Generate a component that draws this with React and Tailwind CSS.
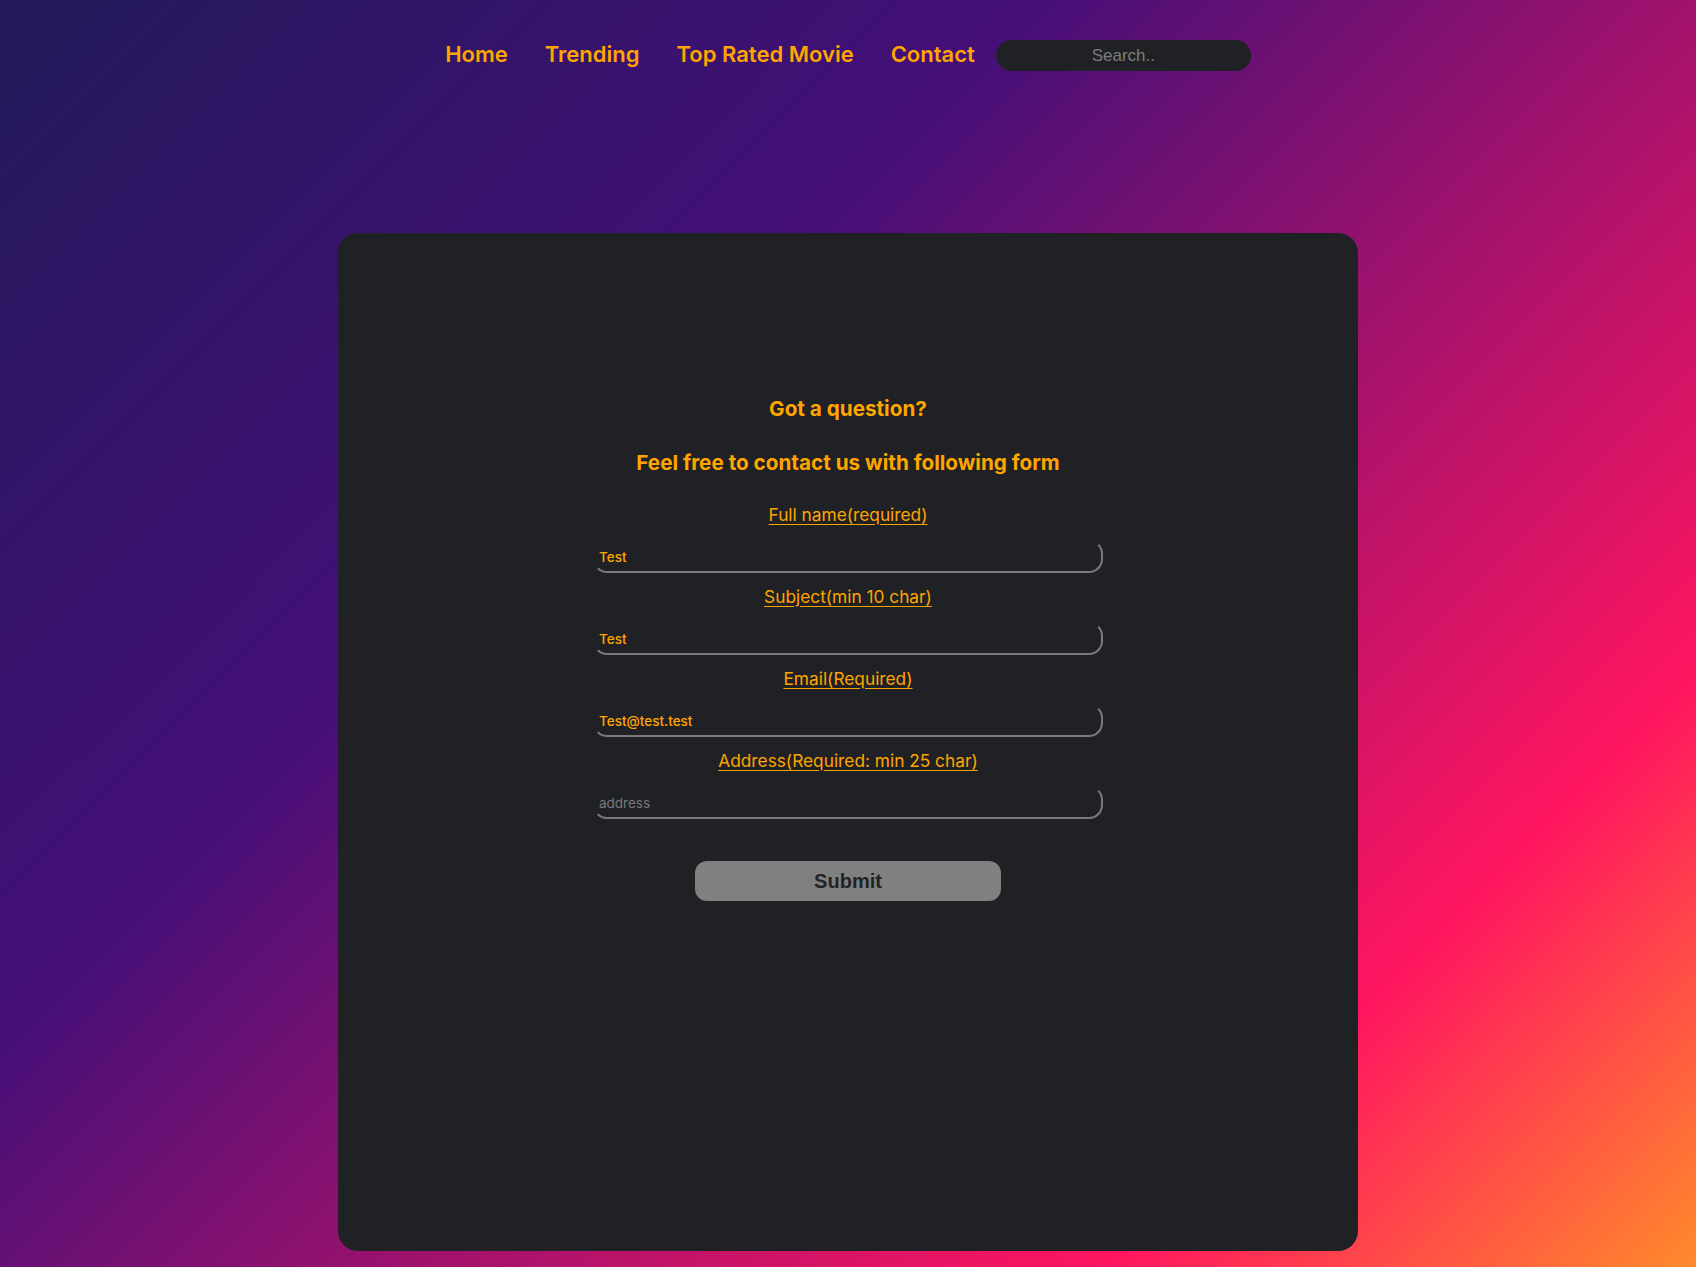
import React from "react";

function Field({ label, value, placeholder }) {
  return (
    <>
      <label className="text-[17.3px] leading-[24px] font-normal text-[#ffa500] underline underline-offset-[3px] mb-[13px]">
        {label}
      </label>
      <input
        type="text"
        defaultValue={value}
        placeholder={placeholder}
        className="w-[510px] h-[33px] mb-[12px] rounded-[14px] border-2 border-t-transparent border-l-transparent border-r-[#7a7a7a] border-b-[#7a7a7a] bg-transparent pl-[4px] pr-[2px] text-[13.5px] font-medium text-[#ffa500] placeholder:text-[#7a7a7a] placeholder:font-normal outline-none"
      />
    </>
  );
}

export default function App() {
  const links = ["Home", "Trending", "Top Rated Movie", "Contact"];
  return (
    <div className="min-h-screen w-full bg-[linear-gradient(135deg,#221a5a_0%,#440f78_35%,#ff1560_80%,#ff8a2c_100%)] font-['Inter',sans-serif] flex flex-col items-center pb-[16px]">
      <nav className="pt-[40px] flex items-center">
        <ul className="flex items-center gap-[37px] -mt-[3px]">
          {links.map((l) => (
            <li key={l}>
              <a href="#" className="text-[22px] font-semibold text-[#ffa500] leading-[31px]">
                {l}
              </a>
            </li>
          ))}
        </ul>
        <input
          type="text"
          placeholder="Search.."
          className="ml-[21px] w-[255px] h-[31px] rounded-full bg-[#202124] text-center font-['Liberation_Sans',sans-serif] text-[17px] text-[#ccc] placeholder:text-[#7d7d7d] outline-none"
        />
      </nav>

      <main className="mt-[162px] w-[1020px] h-[1018px] rounded-[20px] bg-[#202124] flex flex-col items-center pt-[162px]">
        <h3 className="text-[20.7px] leading-[28px] font-bold text-[#ffa500]">Got a question?</h3>
        <h3 className="mt-[26px] text-[20.7px] leading-[28px] font-bold text-[#ffa500]">
          Feel free to contact us with following form
        </h3>
        <form className="mt-[26px] flex flex-col items-center" onSubmit={(e) => e.preventDefault()}>
          <Field label="Full name(required)" value="Test" />
          <Field label="Subject(min 10 char)" value="Test" />
          <Field label="Email(Required)" value="Test@test.test" />
          <Field label="Address(Required: min 25 char)" placeholder="address" />
          <button
            type="submit"
            className="mt-[30px] w-[306px] h-[40px] rounded-[12px] bg-[#808080] font-['Liberation_Sans',sans-serif] text-[20px] font-bold text-[#222327]"
          >
            Submit
          </button>
        </form>
      </main>
    </div>
  );
}
